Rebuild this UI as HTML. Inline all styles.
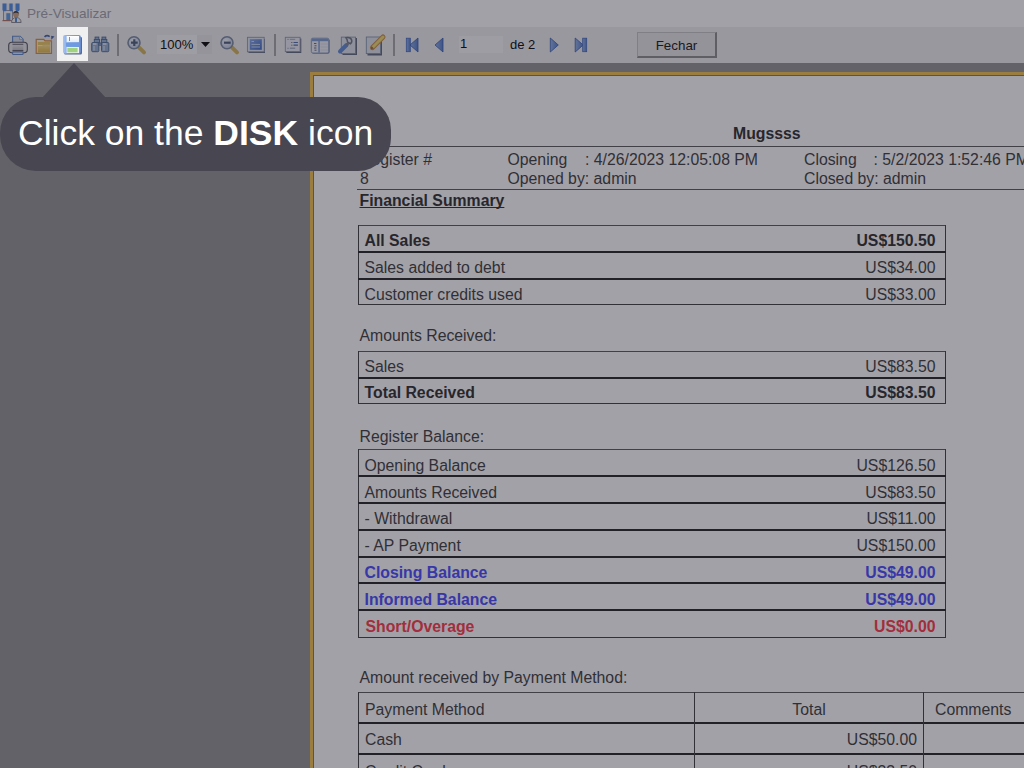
<!DOCTYPE html>
<html><head><meta charset="utf-8">
<style>
*{box-sizing:border-box;margin:0;padding:0}
html,body{width:1024px;height:768px;overflow:hidden;background:#919191;font-family:"Liberation Sans",sans-serif}
.abs{position:absolute}
#title{position:absolute;left:0;top:0;width:1024px;height:27px;background:#fff}
#title .txt{position:absolute;left:27px;top:5px;font-size:13.6px;line-height:18px;color:#a0a0a8}
#tb{position:absolute;left:0;top:27px;width:1024px;height:36px;background:#f0f0f0;border-bottom:0}
.ico{position:absolute}
.sep{position:absolute;width:2px;top:7px;height:22px;background:#a4a4a6}
#page{position:absolute;left:310px;top:72px;width:800px;height:800px;background:#fff;border-left:3px solid #f5c04a;border-top:3px solid #f5c04a}
#page:after{content:"";position:absolute;left:0;top:0;right:0;bottom:0;border-left:1px solid #777;border-top:1px solid #777}
.t{position:absolute;white-space:nowrap;font-size:15.8px;line-height:18.17px;color:#383838}
.b{font-weight:bold;color:#282828}
.u{text-decoration:underline;text-decoration-skip-ink:none}
.blue{color:#4545ff}
.red{color:#ff3444}
.ln{position:absolute}
#ov{position:absolute;left:57px;top:27px;width:31px;height:34px;box-shadow:0 0 0 3000px rgba(40,38,52,0.43)}
#tip{position:absolute;left:0;top:97px;width:391px;height:74px;background:#474651;border-radius:36px 33px 33px 36px;color:#fff;font-size:35.5px;line-height:72px;padding-left:18px;white-space:nowrap}
#tipar{position:absolute;left:41.5px;top:63px;width:0;height:0;border-left:32.5px solid transparent;border-right:32.5px solid transparent;border-bottom:35px solid #474651}
</style></head><body>
<div id="title">
  <svg class="ico" style="left:0;top:0" width="24" height="24" viewBox="0 0 24 24">
    <rect x="3.5" y="10.5" width="9" height="10" fill="#f4f4f4" stroke="#9a9aa8" stroke-width="1"/>
    <rect x="2.5" y="3.5" width="17.5" height="6.5" fill="#f0f0f0"/>
    <path d="M2.5 3.5h4v6.5c0 1-1 1.2-2 1.2s-2-.2-2-1.2z" fill="#4a88e4"/>
    <path d="M9.3 3.5h3.4v6.8c0 .8-.8 1-1.7 1s-1.7-.2-1.7-1z" fill="#4a88e4"/>
    <path d="M15.5 3.5h4v6.5c0 1-1 1.2-2 1.2s-2-.2-2-1.2z" fill="#4a88e4"/>
    <rect x="6.3" y="13.2" width="4" height="6.8" fill="#5a98e0"/>
    <rect x="2.5" y="20" width="8" height="1.2" fill="#b07060"/>
    <path d="M11.5 22.5c0-3 2-5 4.8-5s4.8 2 4.8 5z" fill="#f8f8f8" stroke="#8a8a90" stroke-width="1"/>
    <rect x="15" y="17.6" width="2" height="4.6" fill="#4a8ad8"/>
    <circle cx="16" cy="14.4" r="2.9" fill="#c8a080"/>
    <path d="M13.1 14c0-2 1.2-3 2.9-3s2.9 1 2.9 3c-.8-1-1.8-1.2-2.9-1.2s-2.1.2-2.9 1.2z" fill="#303030"/>
  </svg>
  <div class="txt">Pré-Visualizar</div>
</div>
<div id="tb">
  <!-- printer -->
  <svg class="ico" style="left:4px;top:5px" width="26" height="26" viewBox="0 0 26 26">
    <defs><linearGradient id="pg" x1="0" y1="0" x2="0" y2="1"><stop offset="0" stop-color="#e8e8ea"/><stop offset="1" stop-color="#b8b8bc"/></linearGradient></defs>
    <path d="M8.6 4.2h7.5l3 3v6h-10.5z" fill="#d4dcec" stroke="#5a84c8" stroke-width="1.1"/>
    <path d="M15.6 4.2v3.4h3.5" fill="#eef2f8" stroke="#8aa4d0" stroke-width="0.8"/>
    <rect x="4.7" y="10.3" width="18.6" height="10.4" rx="3.2" fill="#e6e6e8" stroke="#505058" stroke-width="1.1"/>
    <rect x="8.5" y="12.3" width="10.8" height="6.4" fill="url(#pg)"/>
    <path d="M8.5 12.3h10.8" stroke="#606068" stroke-width="1"/>
    <path d="M8.5 18.7h10.8" stroke="#505058" stroke-width="1.2"/>
    <rect x="8.6" y="19.9" width="10.5" height="2.6" rx="0.8" fill="#dce6f4" stroke="#5a84c8" stroke-width="1.1"/>
  </svg>
  <!-- folder -->
  <svg class="ico" style="left:32px;top:5px" width="26" height="26" viewBox="0 0 26 26">
    <defs><linearGradient id="fg" x1="0" y1="0" x2="0" y2="1"><stop offset="0" stop-color="#f8e090"/><stop offset="1" stop-color="#e8b838"/></linearGradient></defs>
    <path d="M4.2 7.4h7.6l1.2 1.4h6.5v12.6h-15.3z" fill="#fdf4dc" stroke="#d88a40" stroke-width="1.2"/>
    <rect x="5.8" y="10" width="12.3" height="3" fill="#eec860"/>
    <path d="M5.8 14h4l1.5-1.2h6.8v7.6h-12.3z" fill="url(#fg)"/>
    <path d="M12.5 4.8c1.5-1.4 3.4-1.6 5.2-.2" fill="none" stroke="#4060a8" stroke-width="1.6"/>
    <path d="M19.2 3.8l3.3 0.6l-3.2 3.4z" fill="#4060a8"/>
  </svg>
  <!-- disk -->
  <svg class="ico" style="left:60px;top:5px" width="26" height="26" viewBox="0 0 26 26">
    <defs><linearGradient id="dg" x1="0" y1="0" x2="1" y2="0"><stop offset="0" stop-color="#a8c4f0"/><stop offset="0.3" stop-color="#80a6e6"/><stop offset="1" stop-color="#6a92dc"/></linearGradient>
    <linearGradient id="lg" x1="0" y1="0" x2="0" y2="1"><stop offset="0" stop-color="#ffffff"/><stop offset="1" stop-color="#e4ecf8"/></linearGradient></defs>
    <rect x="4" y="4.7" width="18" height="17.8" rx="1.5" fill="#5a6a88"/>
    <rect x="3" y="3" width="17.8" height="18.7" rx="2" fill="url(#dg)"/>
    <rect x="6.6" y="4" width="12.4" height="6.2" fill="url(#lg)"/>
    <rect x="9" y="5" width="0.9" height="4" fill="#5a88d4"/>
    <rect x="6" y="10.8" width="13" height="3.8" fill="#6e9ae2"/>
    <rect x="6.6" y="15" width="12.4" height="6" fill="#eef2f8"/>
    <rect x="7.3" y="15.9" width="10.3" height="4.4" fill="#a0d280"/>
  </svg>
  <!-- binoculars -->
  <svg class="ico" style="left:88px;top:5px" width="26" height="26" viewBox="0 0 26 26">
    <g fill="#92acd2" stroke="#4e6c94" stroke-width="1">
      <rect x="7.1" y="5.1" width="3.7" height="2.4"/>
      <rect x="6.3" y="7.5" width="5.2" height="3"/>
      <rect x="3.7" y="10.5" width="7.1" height="9.2" rx="1"/>
      <rect x="14" y="5.1" width="3.8" height="2.4"/>
      <rect x="13.4" y="7.5" width="5.4" height="3"/>
      <rect x="13.5" y="10.5" width="7.3" height="9.2" rx="1"/>
      <rect x="10.8" y="11" width="2.7" height="2.2"/>
    </g>
    <rect x="5" y="11.2" width="3.5" height="1.6" fill="#e4ecf8"/>
    <rect x="15" y="11.2" width="3.5" height="1.6" fill="#e4ecf8"/>
    <rect x="5.2" y="14" width="1.6" height="4.6" fill="#c8d6ea"/>
    <rect x="15.2" y="14" width="1.6" height="4.6" fill="#c8d6ea"/>
  </svg>
  <div class="sep" style="left:117px"></div>
  <!-- zoom in -->
  <svg class="ico" style="left:122px;top:5px" width="26" height="26" viewBox="0 0 26 26">
    <defs><radialGradient id="mg" cx="0.4" cy="0.35" r="0.7"><stop offset="0" stop-color="#f4f8ff"/><stop offset="1" stop-color="#b8c8e4"/></radialGradient></defs>
    <path d="M17.2 15.6l4.8 4.8" stroke="#d4b458" stroke-width="4" stroke-linecap="round"/>
    <circle cx="12" cy="10.7" r="6" fill="url(#mg)" stroke="#7888a0" stroke-width="1.6"/>
    <path d="M9 10.7h6.7M12.3 7.3v6.6" stroke="#485a78" stroke-width="2.2"/>
  </svg>
  <div class="abs" style="left:157px;top:8px;width:55px;height:19px;background:#f8f8f8"></div>
  <div class="abs" style="left:197px;top:8px;width:15px;height:19px;background:#e8e8e8"></div>
  <div class="abs" style="left:160px;top:9px;font-size:13px;line-height:17px;color:#000">100%</div>
  <svg class="ico" style="left:201px;top:15px" width="9" height="6" viewBox="0 0 9 6"><path d="M0 0h9L4.5 5z" fill="#000"/></svg>
  <!-- zoom out -->
  <svg class="ico" style="left:215px;top:5px" width="26" height="26" viewBox="0 0 26 26">
    <path d="M17.2 15.6l4.8 4.8" stroke="#d4b458" stroke-width="4" stroke-linecap="round"/>
    <circle cx="12" cy="10.7" r="6" fill="url(#mg)" stroke="#7888a0" stroke-width="1.6"/>
    <path d="M9 10.7h6.7" stroke="#485a78" stroke-width="2.2"/>
  </svg>
  <!-- page width -->
  <svg class="ico" style="left:244px;top:5px" width="26" height="26" viewBox="0 0 26 26">
    <defs><linearGradient id="bg1" x1="0" y1="0" x2="1" y2="1"><stop offset="0" stop-color="#86a8e8"/><stop offset="1" stop-color="#3c64c0"/></linearGradient></defs>
    <rect x="4.5" y="7" width="16.5" height="14" fill="#5a6478"/>
    <rect x="3.4" y="5.3" width="16.8" height="14.5" fill="#dfe6f2" stroke="#8a96ac" stroke-width="0.9"/>
    <rect x="5.8" y="7.2" width="12" height="10.6" fill="url(#bg1)"/>
    <path d="M7.5 9.5h2.5M7.5 12.4h8.5M7.5 15h8.5" stroke="#c8daf8" stroke-width="1"/>
  </svg>
  <div class="sep" style="left:274px"></div>
  <!-- list -->
  <svg class="ico" style="left:282px;top:5px" width="26" height="26" viewBox="0 0 26 26">
    <rect x="4.3" y="6.5" width="15" height="14.5" fill="#5a6478"/>
    <rect x="3.3" y="5.3" width="14.8" height="14.3" fill="#e8ecf4" stroke="#8a96ac" stroke-width="0.9"/>
    <path d="M7.8 7.4h5.4M7.8 16.3h5.4" stroke="#a8b4c8" stroke-width="1.4"/>
    <path d="M11.5 10.5h4.4M11.5 13.2h4.4" stroke="#4a68a8" stroke-width="1.2"/>
    <path d="M9 10.5h1.5M9 13.2h1.5" stroke="#8090a8" stroke-width="1"/>
    <rect x="5.4" y="6.8" width="1.2" height="1.2" fill="#9aa4b8"/>
    <rect x="5.4" y="15.7" width="1.2" height="1.2" fill="#9aa4b8"/>
  </svg>
  <!-- table -->
  <svg class="ico" style="left:308px;top:5px" width="26" height="26" viewBox="0 0 26 26">
    <rect x="4" y="7" width="17.5" height="14.5" rx="1.5" fill="#5a6478"/>
    <rect x="3.3" y="6.2" width="17.5" height="14.8" rx="1.5" fill="#eef0f6" stroke="#7890b8" stroke-width="0.9"/>
    <rect x="3.8" y="6.6" width="16.6" height="2.6" fill="#7c9ad0"/>
    <rect x="10.3" y="9" width="1.5" height="11.6" fill="#7c9ad0"/>
    <path d="M6 11.5h2.4M6.5 13.8h2M6 16h2.4M6.5 18.2h2" stroke="#505868" stroke-width="0.9"/>
    <path d="M12.5 12h7.5M12.5 15h7.5M12.5 18h7.5" stroke="#d0d8e6" stroke-width="0.8"/>
  </svg>
  <!-- wrench -->
  <svg class="ico" style="left:334px;top:5px" width="26" height="26" viewBox="0 0 26 26">
    <rect x="8.5" y="6" width="14.5" height="17" fill="#5a6478"/>
    <rect x="7.3" y="5.1" width="14.2" height="16.5" fill="#dce2ec" stroke="#8090a8" stroke-width="0.9"/>
    <path d="M12 5.8c3-1 5.8.5 5.8 3.3c0 1.2-.6 2.2-1.4 2.7l-2.8-1.7l-.5-2.4z" fill="none" stroke="#707680" stroke-width="1.6"/>
    <path d="M6 19.5l6.5-6.5" stroke="#5a88d4" stroke-width="4" stroke-linecap="round"/>
    <path d="M12.5 13l2-2" stroke="#7a8090" stroke-width="2.5"/>
  </svg>
  <!-- pencil -->
  <svg class="ico" style="left:363px;top:5px" width="26" height="26" viewBox="0 0 26 26">
    <rect x="4.5" y="6" width="14.5" height="17.5" fill="#5a6478"/>
    <rect x="3.3" y="5" width="14.3" height="16.6" fill="#dce2ec" stroke="#8090a8" stroke-width="0.9"/>
    <path d="M9.5 15.5l10.5-10.5" stroke="#c88a40" stroke-width="5" stroke-linecap="round"/>
    <path d="M9.5 15.5l10.5-10.5" stroke="#f0dc70" stroke-width="3" stroke-linecap="round"/>
    <path d="M7.5 17.5l1-3.5l2.5 2.5z" fill="#9a6a40"/>
  </svg>
  <div class="sep" style="left:393px"></div>
  <!-- first -->
  <svg class="ico" style="left:396px;top:5px" width="26" height="26" viewBox="0 0 26 26">
    <defs><linearGradient id="ag" x1="0" y1="0" x2="1" y2="0"><stop offset="0" stop-color="#90b0e8"/><stop offset="1" stop-color="#5078c8"/></linearGradient></defs>
    <rect x="10.3" y="6.2" width="4" height="13.5" fill="url(#ag)" stroke="#3a64bc" stroke-width="0.8"/>
    <path d="M22 6v14l-8-7z" fill="url(#ag)" stroke="#3058b0" stroke-width="0.8"/>
  </svg>
  <!-- prev -->
  <svg class="ico" style="left:426px;top:5px" width="20" height="26" viewBox="0 0 20 26">
    <path d="M17 6v14l-8-7z" fill="url(#ag)" stroke="#3058b0" stroke-width="0.8"/>
  </svg>
  <div class="abs" style="left:459px;top:9px;width:44px;height:17px;background:#f8f8f8"></div>
  <div class="abs" style="left:460px;top:9px;font-size:13px;line-height:16px;color:#000">1</div>
  <div class="abs" style="left:510px;top:9px;font-size:13px;line-height:17px;color:#000">de 2</div>
  <!-- next -->
  <svg class="ico" style="left:546px;top:5px" width="20" height="26" viewBox="0 0 20 26">
    <path d="M4.3 6v14l8-7z" fill="url(#ag)" stroke="#3058b0" stroke-width="0.8"/>
  </svg>
  <!-- last -->
  <svg class="ico" style="left:570px;top:5px" width="26" height="26" viewBox="0 0 26 26">
    <path d="M5.2 6v14l8-7z" fill="url(#ag)" stroke="#3058b0" stroke-width="0.8"/>
    <rect x="12.7" y="6.2" width="4" height="13.5" fill="url(#ag)" stroke="#3a64bc" stroke-width="0.8"/>
  </svg>
  <div class="abs" style="left:637px;top:5px;width:80px;height:26px;background:#e6e6e6;border:1px solid #c4c4c4;border-right:2px solid #8a8a8a;border-bottom:2px solid #8a8a8a;font-size:13.4px;line-height:26px;text-align:center;color:#111">Fechar</div>
</div>
<div id="page"></div>
<div class="t b" style="left:733px;top:124.74px;">Mugssss</div>
<div class="ln" style="left:357px;width:667px;top:146px;height:1px;background:#555"></div>
<div class="t " style="left:360px;top:151.24px;">Register #</div>
<div class="t " style="left:507.5px;top:151.24px;">Opening</div>
<div class="t " style="left:585px;top:151.24px;">: 4/26/2023 12:05:08 PM</div>
<div class="t " style="left:804px;top:151.24px;">Closing</div>
<div class="t " style="left:873.5px;top:151.24px;">: 5/2/2023 1:52:46 PM</div>
<div class="t " style="left:360px;top:170.44px;">8</div>
<div class="t " style="left:507.5px;top:170.44px;">Opened by: admin</div>
<div class="t " style="left:804px;top:170.44px;">Closed by: admin</div>
<div class="ln" style="left:357px;width:667px;top:189px;height:1px;background:#555"></div>
<div class="t b u" style="left:359.5px;top:191.94px;">Financial Summary</div>
<div class="ln" style="left:358px;width:588px;top:225px;height:1px;background:#555"></div>
<div class="ln" style="left:358px;width:588px;top:304px;height:1px;background:#3a3a3a"></div>
<div class="ln" style="left:358px;width:1px;top:225px;height:80px;background:#3a3a3a"></div>
<div class="ln" style="left:945px;width:1px;top:225px;height:80px;background:#3a3a3a"></div>
<div class="ln" style="left:358px;width:588px;top:251px;height:2px;background:#1e1e1e"></div>
<div class="ln" style="left:358px;width:588px;top:278px;height:2px;background:#1e1e1e"></div>
<div class="t b" style="left:364.5px;top:231.64px;">All Sales</div>
<div class="t b" style="right:88.5px;top:231.64px;">US$150.50</div>
<div class="t " style="left:364.5px;top:258.94px;">Sales added to debt</div>
<div class="t " style="right:88.5px;top:258.94px;">US$34.00</div>
<div class="t " style="left:364.5px;top:285.94px;">Customer credits used</div>
<div class="t " style="right:88.5px;top:285.94px;">US$33.00</div>
<div class="t " style="left:359.5px;top:327.44px;">Amounts Received:</div>
<div class="ln" style="left:358px;width:588px;top:351px;height:1px;background:#555"></div>
<div class="ln" style="left:358px;width:588px;top:403px;height:1px;background:#3a3a3a"></div>
<div class="ln" style="left:358px;width:1px;top:351px;height:53px;background:#3a3a3a"></div>
<div class="ln" style="left:945px;width:1px;top:351px;height:53px;background:#3a3a3a"></div>
<div class="ln" style="left:358px;width:588px;top:377px;height:2px;background:#1e1e1e"></div>
<div class="t " style="left:364.5px;top:357.94px;">Sales</div>
<div class="t " style="right:88.5px;top:357.94px;">US$83.50</div>
<div class="t b" style="left:364.5px;top:383.94px;">Total Received</div>
<div class="t b" style="right:88.5px;top:383.94px;">US$83.50</div>
<div class="t " style="left:359.5px;top:427.94px;">Register Balance:</div>
<div class="ln" style="left:358px;width:588px;top:449px;height:1px;background:#555"></div>
<div class="ln" style="left:358px;width:588px;top:637px;height:1px;background:#3a3a3a"></div>
<div class="ln" style="left:358px;width:1px;top:449px;height:189px;background:#3a3a3a"></div>
<div class="ln" style="left:945px;width:1px;top:449px;height:189px;background:#3a3a3a"></div>
<div class="ln" style="left:358px;width:588px;top:475px;height:2px;background:#1e1e1e"></div>
<div class="ln" style="left:358px;width:588px;top:502px;height:2px;background:#1e1e1e"></div>
<div class="ln" style="left:358px;width:588px;top:529px;height:2px;background:#1e1e1e"></div>
<div class="ln" style="left:358px;width:588px;top:556px;height:2px;background:#1e1e1e"></div>
<div class="ln" style="left:358px;width:588px;top:582px;height:2px;background:#1e1e1e"></div>
<div class="ln" style="left:358px;width:588px;top:609px;height:2px;background:#1e1e1e"></div>
<div class="t " style="left:364.5px;top:456.74px;">Opening Balance</div>
<div class="t " style="right:88.5px;top:456.74px;">US$126.50</div>
<div class="t " style="left:364.5px;top:484.14px;">Amounts Received</div>
<div class="t " style="right:88.5px;top:484.14px;">US$83.50</div>
<div class="t " style="left:364.5px;top:510.19px;">- Withdrawal</div>
<div class="t " style="right:88.5px;top:510.19px;">US$11.00</div>
<div class="t " style="left:364.5px;top:537.24px;">- AP Payment</div>
<div class="t " style="right:88.5px;top:537.24px;">US$150.00</div>
<div class="t b blue" style="left:364.5px;top:564.24px;">Closing Balance</div>
<div class="t b blue" style="right:88.5px;top:564.24px;">US$49.00</div>
<div class="t b blue" style="left:364.5px;top:590.84px;">Informed Balance</div>
<div class="t b blue" style="right:88.5px;top:590.84px;">US$49.00</div>
<div class="t b red" style="left:364.5px;top:618.44px;"><span style="margin-left:1px">Short/Overage</span></div>
<div class="t b red" style="right:88.5px;top:618.44px;">US$0.00</div>
<div class="t " style="left:359.5px;top:669.44px;">Amount received by Payment Method:</div>
<div class="ln" style="left:358px;width:666px;top:692px;height:1px;background:#555"></div>
<div class="ln" style="left:358px;width:1px;top:692px;height:76px;background:#3a3a3a"></div>
<div class="ln" style="left:358px;width:666px;top:722px;height:2px;background:#1e1e1e"></div>
<div class="ln" style="left:358px;width:666px;top:753px;height:2px;background:#1e1e1e"></div>
<div class="ln" style="left:694px;width:1px;top:692px;height:76px;background:#3a3a3a"></div>
<div class="ln" style="left:923px;width:1px;top:692px;height:76px;background:#3a3a3a"></div>
<div class="t " style="left:365px;top:701.24px;">Payment Method</div>
<div class="t " style="left:609px;width:400px;text-align:center;top:701.24px;">Total</div>
<div class="t " style="left:935px;top:701.24px;">Comments</div>
<div class="t " style="left:365px;top:730.94px;">Cash</div>
<div class="t " style="right:107px;top:730.94px;">US$50.00</div>
<div class="t " style="left:365px;top:763.44px;">Credit Card</div>
<div class="t " style="right:107px;top:763.44px;">US$33.50</div>
<div id="ov"></div>
<div id="tipar"></div>
<div id="tip">Click on the <b>DISK</b> icon</div>
</body></html>
